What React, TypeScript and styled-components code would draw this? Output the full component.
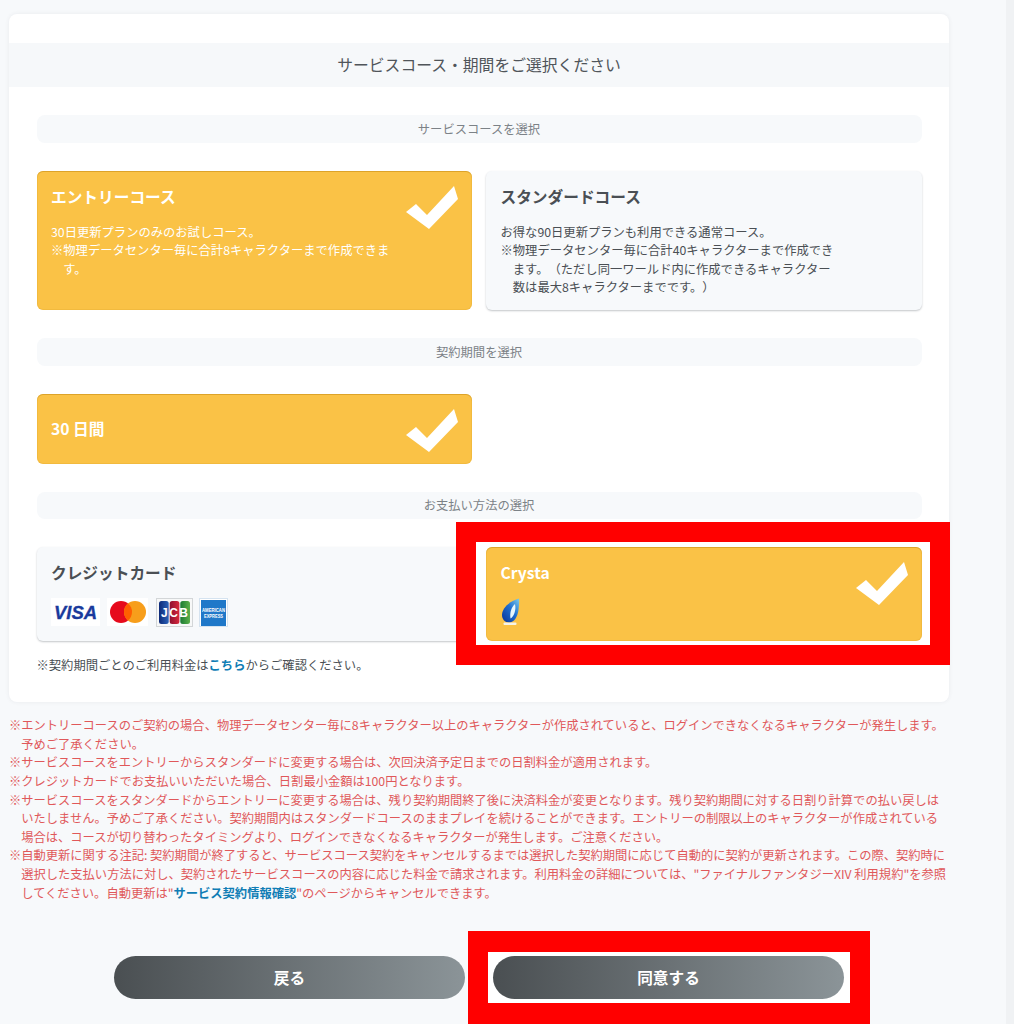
import React from "react";
import styled, { createGlobalStyle } from "styled-components";

const Global = createGlobalStyle`
  html, body { margin: 0; padding: 0; background: #f7f9fb; }
  #root { height: 1024px; overflow: hidden; }
  * { box-sizing: border-box; text-spacing-trim: space-all; }
`;

const Shell = styled.div`
  display: flex;
  height: 1024px;
  overflow: hidden;
  font-family: "Noto Sans CJK JP", "Noto Sans", sans-serif;
  color: #4a4f54;
`;
const Main = styled.main`
  flex: 1;
  min-width: 0;
  padding: 14px 57px 0 9px;
`;
const ScrollTrack = styled.div`
  width: 8px;
  flex: none;
  background: #f0f2f4;
`;
const Panel = styled.section`
  background: #fff;
  border-radius: 8px;
  box-shadow: 0 0 4px rgba(60, 70, 80, 0.08);
  padding: 29px 0 28px;
`;
const PanelTitle = styled.h1`
  margin: 0;
  height: 44px;
  padding-bottom: 1px;
  display: flex;
  align-items: center;
  justify-content: center;
  background: #f6f8fa;
  font-size: 15.8px;
  font-weight: 400;
  color: #50555a;
`;
const PanelBody = styled.div`
  padding: 28px 27.5px 0;
  display: flex;
  flex-direction: column;
  gap: 28px;
`;
const SectionLabel = styled.div<{ $height?: number }>`
  height: ${(p) => p.$height ?? 28}px;
  padding-bottom: 1px;
  display: flex;
  align-items: center;
  justify-content: center;
  border-radius: 8px;
  background: #f7f9fb;
  font-size: 12.3px;
  color: #7c8287;
`;
const ChoiceGrid = styled.div`
  display: grid;
  grid-template-columns: 1fr 1fr;
  gap: 14px;
`;
const Choice = styled.div<{ $selected?: boolean; $height: number; $center?: boolean }>`
  position: relative;
  min-height: ${(p) => p.$height}px;
  border-radius: 6px;
  padding: ${(p) => (p.$center ? "0 14.5px" : "16px 14.5px 0")};
  display: flex;
  flex-direction: column;
  justify-content: ${(p) => (p.$center ? "center" : "flex-start")};
  background: ${(p) => (p.$selected ? "#fac246" : "#f7f9fb")};
  color: ${(p) => (p.$selected ? "#fff" : "#4a4f54")};
  box-shadow: ${(p) =>
    p.$selected
      ? "inset 0 1px 0 rgba(190, 130, 10, 0.4), inset 0 0 0 1px rgba(190, 130, 10, 0.12)"
      : "0 1px 2px rgba(40, 50, 60, 0.28)"};
`;
const ChoiceTitle = styled.h2`
  margin: 0;
  font-size: 15.7px;
  line-height: 20px;
  font-weight: 700;
`;
const Description = styled.div`
  margin-top: 15.5px;
  width: 342px;
  font-size: 12.3px;
  line-height: 18.5px;
`;
const Hanging = styled.div`
  padding-left: 1em;
  text-indent: -1em;
`;
const CheckSvg = styled.svg`
  position: absolute;
  top: 15px;
  right: 14px;
  width: 52px;
  height: 43px;
`;
const Logos = styled.div`
  margin-top: 15px;
  display: flex;
`;
const LogoBox = styled.svg<{ $gap?: number }>`
  display: block;
  margin-right: ${(p) => p.$gap ?? 0}px;
`;
const Footnote = styled.p`
  margin: 14.7px 0 0;
  padding-left: 27.5px;
  font-size: 12.3px;
  line-height: 18.6px;
  color: #4a4f54;
`;
const Link = styled.a`
  color: #0f7db5;
  font-weight: 700;
  text-decoration: none;
`;
const Notes = styled.ul`
  list-style: none;
  margin: 14px 0 0;
  padding: 0;
  font-size: 12.28px;
  line-height: 18.6px;
  color: #e0585a;
`;
const Note = styled.li`
  padding-left: 1em;
  text-indent: -1em;
`;
const Actions = styled.div`
  margin-top: 54px;
  display: flex;
  justify-content: center;
  gap: 28px;
`;
const ActionSlot = styled.div`
  position: relative;
  width: 351px;
`;
const Button = styled.button`
  position: relative;
  z-index: 1;
  display: block;
  width: 100%;
  height: 43px;
  padding: 0 0 1px;
  border: 0;
  border-radius: 22px;
  background: linear-gradient(90deg, #4a4f52 0%, #8b9498 100%);
  color: #fff;
  font-family: inherit;
  font-size: 15.65px;
  font-weight: 700;
`;
const ChoiceSlot = styled.div`
  position: relative;
`;
const Highlight = styled.div<{ $inset: string; $border?: string }>`
  position: absolute;
  inset: ${(p) => p.$inset};
  border-style: solid;
  border-color: #ff0000;
  border-width: ${(p) => p.$border ?? "20px"};
  background: #fff;
`;

const Check = () => (
  <CheckSvg viewBox="0 0 52 43">
    <polygon points="0,26 10,18 21,29 48,0 52,13 23,43" fill="#fff" />
  </CheckSvg>
);

const Visa = () => (
  <LogoBox width="49" height="28" viewBox="0 0 49 28" $gap={7}>
    <rect width="49" height="28" fill="#fff" />
    <text
      x="24.5"
      y="20.5"
      textAnchor="middle"
      fontFamily="Liberation Sans"
      fontWeight="700"
      fontStyle="italic"
      fontSize="18.5"
      stroke="#1a3a9c"
      strokeWidth="0.3"
      fill="#1a3a9c"
    >
      VISA
    </text>
  </LogoBox>
);

const Mastercard = () => (
  <LogoBox width="41" height="28" viewBox="0 0 41 28" $gap={8}>
    <rect width="41" height="28" fill="#fff" />
    <circle cx="14" cy="14" r="11" fill="#e60a1c" />
    <circle cx="28" cy="14" r="11" fill="#f79e1b" />
    <path d="M21 5.5a11 11 0 0 1 0 17a11 11 0 0 1 0-17z" fill="#ff5f00" />
  </LogoBox>
);

const Jcb = () => (
  <LogoBox width="37" height="29" viewBox="0 0 37 29" $gap={6}>
    <defs>
      <linearGradient id="jcbBlue" x1="0" y1="0" x2="1" y2="0">
        <stop offset="0" stopColor="#0e2a78" />
        <stop offset="1" stopColor="#2a62b8" />
      </linearGradient>
      <linearGradient id="jcbRed" x1="0" y1="0" x2="1" y2="0">
        <stop offset="0" stopColor="#8e1030" />
        <stop offset="1" stopColor="#d8283c" />
      </linearGradient>
      <linearGradient id="jcbGreen" x1="0" y1="0" x2="1" y2="0">
        <stop offset="0" stopColor="#1b7a34" />
        <stop offset="1" stopColor="#5bb04a" />
      </linearGradient>
    </defs>
    <rect x="0.5" y="0.5" width="36" height="28" fill="#f7f8f8" stroke="#d3d6d8" />
    <rect x="3" y="3" width="9.7" height="23" rx="2.5" fill="url(#jcbBlue)" />
    <rect x="13.7" y="3" width="9.7" height="23" rx="2.5" fill="url(#jcbRed)" />
    <rect x="24.3" y="3" width="9.7" height="23" rx="2.5" fill="url(#jcbGreen)" />
    <text
      x="18.5"
      y="19"
      textAnchor="middle"
      fontFamily="Liberation Sans"
      fontWeight="700"
      fontSize="12"
      textLength="27"
      lengthAdjust="spacing"
      fill="#fff"
    >
      JCB
    </text>
  </LogoBox>
);

const Amex = () => (
  <LogoBox width="29" height="29" viewBox="0 0 29 29">
    <rect x="0.5" y="0.5" width="28" height="28" fill="#fff" stroke="#d5e3f0" />
    <rect x="2" y="2" width="25" height="26" fill="#1f78c9" />
    <text
      x="14.5"
      y="13.5"
      textAnchor="middle"
      fontFamily="Liberation Sans"
      fontWeight="700"
      fontSize="4.6"
      textLength="23"
      lengthAdjust="spacingAndGlyphs"
      fill="#fff"
    >
      AMERICAN
    </text>
    <text
      x="14.5"
      y="19.5"
      textAnchor="middle"
      fontFamily="Liberation Sans"
      fontWeight="700"
      fontSize="4.6"
      textLength="19"
      lengthAdjust="spacingAndGlyphs"
      fill="#fff"
    >
      EXPRESS
    </text>
  </LogoBox>
);

const CrystaIcon = () => (
  <LogoBox width="20" height="28" viewBox="0 0 20 28">
    <defs>
      <linearGradient id="crysta" x1="0" y1="1" x2="1" y2="0">
        <stop offset="0" stopColor="#0a3296" />
        <stop offset="0.55" stopColor="#1f6fd0" />
        <stop offset="1" stopColor="#7fcdea" />
      </linearGradient>
    </defs>
    <path d="M18 0.5C10 2.5 1 9.5 1 17C1 21.5 4 24.5 8 24.5C13 24.5 16.5 19 17.5 12C18 8 18.5 4 18 0.5Z" fill="url(#crysta)" />
    <path d="M14 6C10.5 9 8.5 14.5 9.5 20.5C12.5 19 15.5 12.5 14 6Z" fill="#e8f7fc" />
    <rect x="2.5" y="24.5" width="13" height="2.5" rx="1" fill="#f7f4e8" />
  </LogoBox>
);

export default function App() {
  return (
    <Shell>
      <Global />
      <Main>
        <Panel>
          <PanelTitle>サービスコース・期間をご選択ください</PanelTitle>
          <PanelBody>
            <SectionLabel>サービスコースを選択</SectionLabel>
            <ChoiceGrid>
              <Choice $selected $height={139}>
                <ChoiceTitle>エントリーコース</ChoiceTitle>
                <Description>
                  <div>30日更新プランのみのお試しコース。</div>
                  <Hanging>※物理データセンター毎に合計8キャラクターまで作成できます。</Hanging>
                </Description>
                <Check />
              </Choice>
              <Choice $height={139}>
                <ChoiceTitle>スタンダードコース</ChoiceTitle>
                <Description>
                  <div>お得な90日更新プランも利用できる通常コース。</div>
                  <Hanging>
                    ※物理データセンター毎に合計40キャラクターまで作成できます。（ただし同一ワールド内に作成できるキャラクター数は最大8キャラクターまでです。）
                  </Hanging>
                </Description>
              </Choice>
            </ChoiceGrid>
            <SectionLabel>契約期間を選択</SectionLabel>
            <ChoiceGrid>
              <Choice $selected $center $height={70}>
                <ChoiceTitle>30 日間</ChoiceTitle>
                <Check />
              </Choice>
            </ChoiceGrid>
            <SectionLabel $height={27}>お支払い方法の選択</SectionLabel>
            <ChoiceGrid>
              <Choice $height={94}>
                <ChoiceTitle>クレジットカード</ChoiceTitle>
                <Logos>
                  <Visa />
                  <Mastercard />
                  <Jcb />
                  <Amex />
                </Logos>
              </Choice>
              <ChoiceSlot>
                <Highlight $inset="-25px -28px -24px -30px" />
                <Choice $selected $height={94}>
                  <ChoiceTitle>Crysta</ChoiceTitle>
                  <Logos>
                    <CrystaIcon />
                  </Logos>
                  <Check />
                </Choice>
              </ChoiceSlot>
            </ChoiceGrid>
          </PanelBody>
          <Footnote>
            ※契約期間ごとのご利用料金は<Link>こちら</Link>からご確認ください。
          </Footnote>
        </Panel>
        <Notes>
          <Note>※エントリーコースのご契約の場合、物理データセンター毎に8キャラクター以上のキャラクターが作成されていると、ログインできなくなるキャラクターが発生します。予めご了承ください。</Note>
          <Note>※サービスコースをエントリーからスタンダードに変更する場合は、次回決済予定日までの日割料金が適用されます。</Note>
          <Note>※クレジットカードでお支払いいただいた場合、日割最小金額は100円となります。</Note>
          <Note>※サービスコースをスタンダードからエントリーに変更する場合は、残り契約期間終了後に決済料金が変更となります。残り契約期間に対する日割り計算での払い戻しはいたしません。予めご了承ください。契約期間内はスタンダードコースのままプレイを続けることができます。エントリーの制限以上のキャラクターが作成されている場合は、コースが切り替わったタイミングより、ログインできなくなるキャラクターが発生します。ご注意ください。</Note>
          <Note>
            ※自動更新に関する注記: 契約期間が終了すると、サービスコース契約をキャンセルするまでは選択した契約期間に応じて自動的に契約が更新されます。この際、契約時に選択した支払い方法に対し、契約されたサービスコースの内容に応じた料金で請求されます。利用料金の詳細については、"ファイナルファンタジーXIV 利用規約"を参照してください。自動更新は"<Link>サービス契約情報確認</Link>"のページからキャンセルできます。
          </Note>
        </Notes>
        <Actions>
          <ActionSlot>
            <Button>戻る</Button>
          </ActionSlot>
          <ActionSlot>
            <Highlight $inset="-25px -26px -26px -25px" $border="21px 20px 22px" />
            <Button>同意する</Button>
          </ActionSlot>
        </Actions>
      </Main>
      <ScrollTrack />
    </Shell>
  );
}
